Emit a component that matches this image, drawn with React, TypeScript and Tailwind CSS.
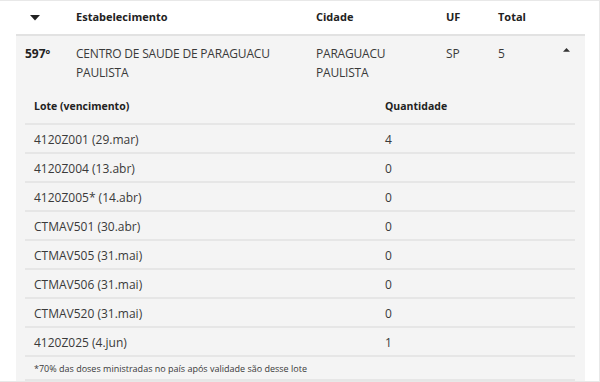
import React from "react";

const lotes = [
  { lote: "4120Z001 (29.mar)", qtd: "4" },
  { lote: "4120Z004 (13.abr)", qtd: "0" },
  { lote: "4120Z005* (14.abr)", qtd: "0" },
  { lote: "CTMAV501 (30.abr)", qtd: "0" },
  { lote: "CTMAV505 (31.mai)", qtd: "0" },
  { lote: "CTMAV506 (31.mai)", qtd: "0" },
  { lote: "CTMAV520 (31.mai)", qtd: "0" },
  { lote: "4120Z025 (4.jun)", qtd: "1" },
];

function Triangle({ up, size }: { up?: boolean; size: number }) {
  const h = size * 0.55;
  return (
    <svg width={size} height={h} viewBox={`0 0 ${size} ${h}`} className="block">
      {up ? (
        <polygon points={`0,${h} ${size},${h} ${size / 2},0`} fill="#333" />
      ) : (
        <polygon points={`0,0 ${size},0 ${size / 2},${h}`} fill="#222" />
      )}
    </svg>
  );
}

export default function App() {
  return (
    <div
      className="w-[600px] h-[382px] bg-white border-t border-r border-b border-[#e8e8e8] pl-4 pr-[14px] overflow-hidden text-[#3a3a3a]"
      style={{ fontFamily: '"Open Sans", "Noto Sans", sans-serif' }}
    >
      {/* header */}
      <div className="grid grid-cols-[60px_240px_130px_52px_1fr] h-[35px] items-center border-b-2 border-[#e2e2e2] text-[11px] font-bold text-[#222]">
        <div className="pl-[14px] pt-[1px]">
          <Triangle size={10} />
        </div>
        <div>Estabelecimento</div>
        <div>Cidade</div>
        <div>UF</div>
        <div>Total</div>
      </div>

      <div className="bg-[#f4f4f4] h-[346px]">
        {/* main row */}
        <div className="grid grid-cols-[60px_240px_130px_52px_1fr] pt-[8px] h-[55px] text-[12px] leading-[19px]">
          <div className="pl-[9px] font-bold text-[#222]">597º</div>
          <div className="tracking-[-0.2px]">
            CENTRO DE SAUDE DE PARAGUACU
            <br />
            PAULISTA
          </div>
          <div className="tracking-[-0.2px]">
            PARAGUACU
            <br />
            PAULISTA
          </div>
          <div>SP</div>
          <div className="flex justify-between pr-[15px]">
            <span>5</span>
            <span className="pt-[4px]">
              <Triangle up size={7} />
            </span>
          </div>
        </div>

        {/* lotes */}
        <div className="ml-[9px] mr-[10px]">
          <div className="grid grid-cols-[360px_1fr] h-[34px] items-center border-b-2 border-[#e6e6e6] text-[10.5px] font-bold text-[#222]">
            <div className="pl-[9px]">Lote (vencimento)</div>
            <div>Quantidade</div>
          </div>
          {lotes.map((l) => (
            <div
              key={l.lote}
              className="grid grid-cols-[360px_1fr] h-[29px] items-center border-b-2 border-[#e6e6e6] text-[12px] pt-[2px]"
            >
              <div className="pl-[9px]">{l.lote}</div>
              <div>{l.qtd}</div>
            </div>
          ))}
          <div className="h-[24px] flex items-center border-b-2 border-[#e6e6e6] pl-[9px] text-[9px] pt-[1px]">
            *70% das doses ministradas no país após validade são desse lote
          </div>
        </div>
      </div>
    </div>
  );
}
